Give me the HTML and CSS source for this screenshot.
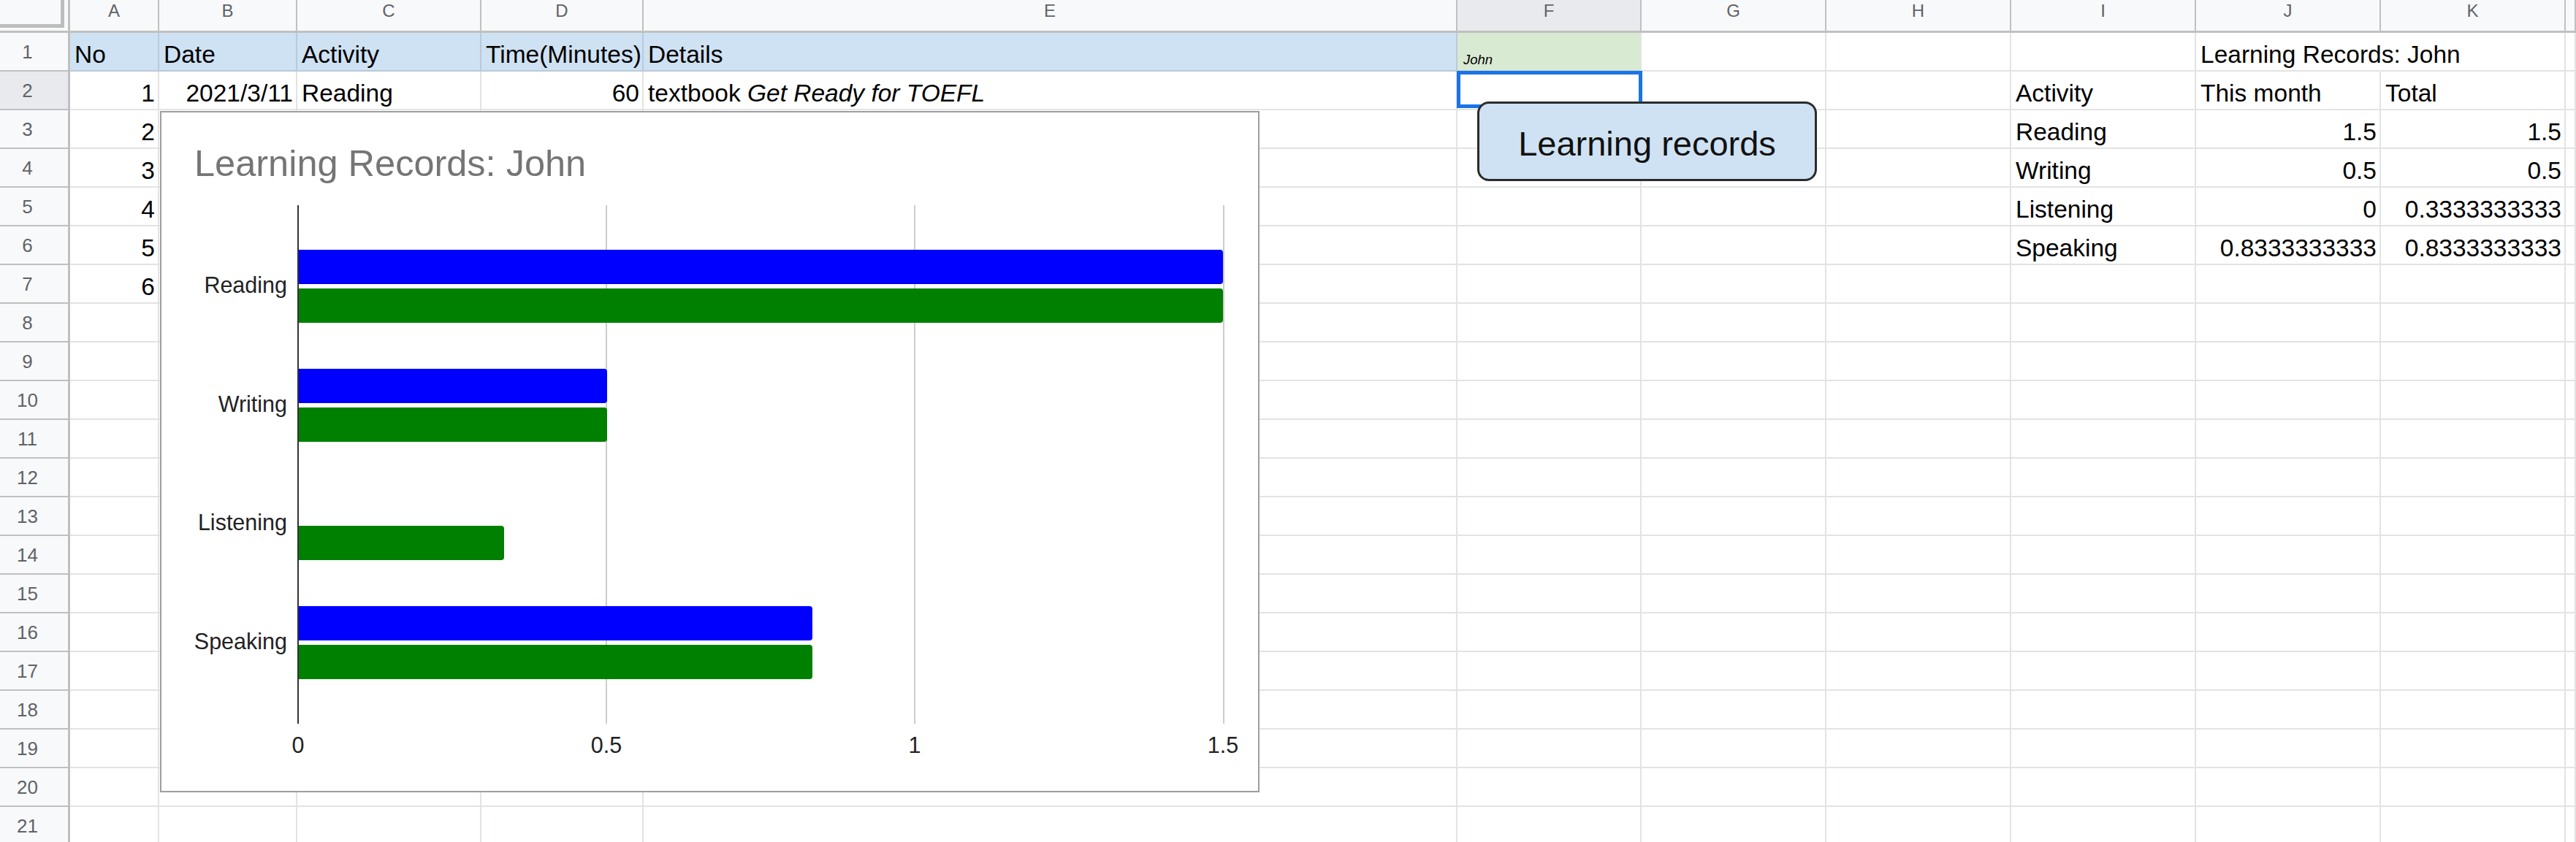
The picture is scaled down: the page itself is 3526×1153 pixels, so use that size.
FILE: index.html
```html
<!DOCTYPE html>
<html lang="en">
<head>
<meta charset="utf-8">
<title>Learning Records</title>
<link rel="stylesheet" href="styles.css">
</head>
<body>
<div class="sheet">
  <div class="grid-area">
    <!-- column headers -->
    <div class="corner"><div class="freeze"></div></div>
    <div class="h">A</div><div class="h">B</div><div class="h">C</div><div class="h">D</div><div class="h">E</div><div class="h sel">F</div><div class="h">G</div><div class="h">H</div><div class="h">I</div><div class="h">J</div><div class="h">K</div><div class="h"></div>
    <!-- row 1 -->
    <div class="r">1</div>
    <div class="c hd">No</div><div class="c hd">Date</div><div class="c hd">Activity</div><div class="c hd">Time(Minutes)</div><div class="c hd">Details</div><div class="c gr">John</div><div class="c"></div><div class="c"></div><div class="c"></div><div class="c ov">Learning Records: John</div><div class="c"></div><div class="c"></div>
    <!-- row 2 -->
    <div class="r sel">2</div>
    <div class="c num">1</div><div class="c num">2021/3/11</div><div class="c">Reading</div><div class="c num">60</div><div class="c">textbook&nbsp;<i>Get Ready for TOEFL</i></div><div class="c"></div><div class="c"></div><div class="c"></div><div class="c">Activity</div><div class="c">This month</div><div class="c">Total</div><div class="c"></div>
    <!-- row 3 -->
    <div class="r">3</div>
    <div class="c num">2</div><div class="c"></div><div class="c"></div><div class="c"></div><div class="c"></div><div class="c"></div><div class="c"></div><div class="c"></div><div class="c">Reading</div><div class="c num">1.5</div><div class="c num">1.5</div><div class="c"></div>
    <!-- row 4 -->
    <div class="r">4</div>
    <div class="c num">3</div><div class="c"></div><div class="c"></div><div class="c"></div><div class="c"></div><div class="c"></div><div class="c"></div><div class="c"></div><div class="c">Writing</div><div class="c num">0.5</div><div class="c num">0.5</div><div class="c"></div>
    <!-- row 5 -->
    <div class="r">5</div>
    <div class="c num">4</div><div class="c"></div><div class="c"></div><div class="c"></div><div class="c"></div><div class="c"></div><div class="c"></div><div class="c"></div><div class="c">Listening</div><div class="c num">0</div><div class="c num">0.3333333333</div><div class="c"></div>
    <!-- row 6 -->
    <div class="r">6</div>
    <div class="c num">5</div><div class="c"></div><div class="c"></div><div class="c"></div><div class="c"></div><div class="c"></div><div class="c"></div><div class="c"></div><div class="c">Speaking</div><div class="c num">0.8333333333</div><div class="c num">0.8333333333</div><div class="c"></div>
    <!-- row 7 -->
    <div class="r">7</div>
    <div class="c num">6</div><div class="c"></div><div class="c"></div><div class="c"></div><div class="c"></div><div class="c"></div><div class="c"></div><div class="c"></div><div class="c"></div><div class="c"></div><div class="c"></div><div class="c"></div>
    <!-- rows 8-21 -->
    <div class="r">8</div>
    <div class="c"></div><div class="c"></div><div class="c"></div><div class="c"></div><div class="c"></div><div class="c"></div><div class="c"></div><div class="c"></div><div class="c"></div><div class="c"></div><div class="c"></div><div class="c"></div>
    <div class="r">9</div>
    <div class="c"></div><div class="c"></div><div class="c"></div><div class="c"></div><div class="c"></div><div class="c"></div><div class="c"></div><div class="c"></div><div class="c"></div><div class="c"></div><div class="c"></div><div class="c"></div>
    <div class="r">10</div>
    <div class="c"></div><div class="c"></div><div class="c"></div><div class="c"></div><div class="c"></div><div class="c"></div><div class="c"></div><div class="c"></div><div class="c"></div><div class="c"></div><div class="c"></div><div class="c"></div>
    <div class="r">11</div>
    <div class="c"></div><div class="c"></div><div class="c"></div><div class="c"></div><div class="c"></div><div class="c"></div><div class="c"></div><div class="c"></div><div class="c"></div><div class="c"></div><div class="c"></div><div class="c"></div>
    <div class="r">12</div>
    <div class="c"></div><div class="c"></div><div class="c"></div><div class="c"></div><div class="c"></div><div class="c"></div><div class="c"></div><div class="c"></div><div class="c"></div><div class="c"></div><div class="c"></div><div class="c"></div>
    <div class="r">13</div>
    <div class="c"></div><div class="c"></div><div class="c"></div><div class="c"></div><div class="c"></div><div class="c"></div><div class="c"></div><div class="c"></div><div class="c"></div><div class="c"></div><div class="c"></div><div class="c"></div>
    <div class="r">14</div>
    <div class="c"></div><div class="c"></div><div class="c"></div><div class="c"></div><div class="c"></div><div class="c"></div><div class="c"></div><div class="c"></div><div class="c"></div><div class="c"></div><div class="c"></div><div class="c"></div>
    <div class="r">15</div>
    <div class="c"></div><div class="c"></div><div class="c"></div><div class="c"></div><div class="c"></div><div class="c"></div><div class="c"></div><div class="c"></div><div class="c"></div><div class="c"></div><div class="c"></div><div class="c"></div>
    <div class="r">16</div>
    <div class="c"></div><div class="c"></div><div class="c"></div><div class="c"></div><div class="c"></div><div class="c"></div><div class="c"></div><div class="c"></div><div class="c"></div><div class="c"></div><div class="c"></div><div class="c"></div>
    <div class="r">17</div>
    <div class="c"></div><div class="c"></div><div class="c"></div><div class="c"></div><div class="c"></div><div class="c"></div><div class="c"></div><div class="c"></div><div class="c"></div><div class="c"></div><div class="c"></div><div class="c"></div>
    <div class="r">18</div>
    <div class="c"></div><div class="c"></div><div class="c"></div><div class="c"></div><div class="c"></div><div class="c"></div><div class="c"></div><div class="c"></div><div class="c"></div><div class="c"></div><div class="c"></div><div class="c"></div>
    <div class="r">19</div>
    <div class="c"></div><div class="c"></div><div class="c"></div><div class="c"></div><div class="c"></div><div class="c"></div><div class="c"></div><div class="c"></div><div class="c"></div><div class="c"></div><div class="c"></div><div class="c"></div>
    <div class="r">20</div>
    <div class="c"></div><div class="c"></div><div class="c"></div><div class="c"></div><div class="c"></div><div class="c"></div><div class="c"></div><div class="c"></div><div class="c"></div><div class="c"></div><div class="c"></div><div class="c"></div>
    <div class="r">21</div>
    <div class="c"></div><div class="c"></div><div class="c"></div><div class="c"></div><div class="c"></div><div class="c"></div><div class="c"></div><div class="c"></div><div class="c"></div><div class="c"></div><div class="c"></div><div class="c"></div>
  </div>

  <!-- embedded chart (floats over the cells) -->
  <div class="chart">
    <div class="chart-title">Learning Records: John</div>
    <div class="chart-body">
      <div class="cats">
        <div class="cat">Reading</div>
        <div class="cat">Writing</div>
        <div class="cat">Listening</div>
        <div class="cat">Speaking</div>
      </div>
      <div class="plot">
        <div class="gline" style="left:420px"></div>
        <div class="gline" style="left:842px"></div>
        <div class="gline" style="left:1265px"></div>
        <div class="band">
          <div class="bar blue" style="width:1265px"></div>
          <div class="bar green" style="width:1265px"></div>
        </div>
        <div class="band">
          <div class="bar blue" style="width:422px"></div>
          <div class="bar green" style="width:422px"></div>
        </div>
        <div class="band">
          <div class="bar blue" style="width:0px"></div>
          <div class="bar green" style="width:281px"></div>
        </div>
        <div class="band">
          <div class="bar blue" style="width:703px"></div>
          <div class="bar green" style="width:703px"></div>
        </div>
        <div class="tick" style="left:-1px">0</div>
        <div class="tick" style="left:421px">0.5</div>
        <div class="tick" style="left:843px">1</div>
        <div class="tick" style="left:1265px">1.5</div>
      </div>
    </div>
  </div>

  <!-- active cell F2 -->
  <div class="selbox"></div>

  <!-- drawing button -->
  <div class="btn">Learning records</div>
</div>
</body>
</html>
```

FILE: styles.css
```css
html, body {
  margin: 0;
  padding: 0;
  background: #ffffff;
}

body {
  width: 3526px;
  height: 1153px;
  overflow: hidden;
  font-family: "Liberation Sans", Arial, sans-serif;
  color: #000;
}

.sheet {
  position: relative;
  width: 3526px;
  height: 1153px;
  overflow: hidden;
}

.grid-area {
  display: grid;
  grid-template-columns: 96px 122px 189px 252px 222px 1114px 252px 253px 253px 253px 253px 253px 14px;
  grid-template-rows: 45px repeat(21, 53px);
}

/* ---------- headers ---------- */
.corner {
  box-sizing: border-box;
  background: #f8f9fa;
  border-right: 3px solid #c0c0c0;
  border-bottom: 3px solid #c0c0c0;
}

.freeze {
  box-sizing: border-box;
  width: 88px;
  height: 38px;
  background: #f8f9fa;
  border-right: 5px solid #bdbdbd;
  border-bottom: 5px solid #bdbdbd;
}

.h {
  box-sizing: border-box;
  display: flex;
  justify-content: center;
  align-items: flex-start;
  padding-top: 3px;
  background: #f8f9fa;
  border-right: 2px solid #c0c0c0;
  border-bottom: 3px solid #c0c0c0;
  color: #5f6368;
  font-size: 24px;
  line-height: 24px;
}

.h.sel {
  background: #e8eaed;
}

.r {
  box-sizing: border-box;
  display: flex;
  align-items: center;
  justify-content: center;
  padding-right: 18px;
  background: #f8f9fa;
  border-right: 3px solid #c0c0c0;
  border-bottom: 2px solid #c0c0c0;
  color: #5f6368;
  font-size: 26px;
  line-height: 26px;
}

.r.sel {
  background: #e8eaed;
}

/* ---------- cells ---------- */
.c {
  box-sizing: border-box;
  display: flex;
  align-items: flex-end;
  padding: 0 4px 1px 6px;
  border-right: 2px solid #e2e3e3;
  border-bottom: 2px solid #e2e3e3;
  font-size: 33.5px;
  line-height: 40px;
  white-space: nowrap;
  min-width: 0;
}

.c.num {
  justify-content: flex-end;
}

.c.hd {
  background: #cfe2f3;
  border-right-color: #b9cad9;
  border-bottom-color: #b9cad9;
}

.c.gr {
  background: #d9ead3;
  border-bottom-color: #c8d5c3;
  padding: 0 4px 4px 8px;
  font-size: 18.5px;
  line-height: 20px;
  font-style: italic;
}

.c.ov {
  border-right-color: transparent;
  overflow: visible;
}

/* ---------- chart ---------- */
.chart {
  position: absolute;
  left: 219px;
  top: 152px;
  width: 1505px;
  height: 933px;
  box-sizing: border-box;
  border: 2px solid #9e9e9e;
  background: #ffffff;
  display: flex;
  flex-direction: column;
}

.chart-title {
  padding: 45px 0 0 45px;
  font-size: 50.5px;
  line-height: 50px;
  color: #757575;
}

.chart-body {
  display: flex;
  margin-top: 32px;
}

.cats {
  width: 186px;
  box-sizing: border-box;
  padding: 30px 14px 30px 0;
  display: flex;
  flex-direction: column;
}

.cat {
  height: 162.5px;
  box-sizing: border-box;
  padding-bottom: 4px;
  display: flex;
  align-items: center;
  justify-content: flex-end;
  font-size: 30.5px;
  line-height: 30px;
  color: #222;
}

.plot {
  position: relative;
  width: 1300px;
  height: 710px;
  box-sizing: border-box;
  border-left: 2px solid #333;
  padding: 30px 0;
  display: flex;
  flex-direction: column;
}

.gline {
  position: absolute;
  top: 0;
  bottom: 0;
  width: 2px;
  background: #cccccc;
}

.band {
  position: relative;
  z-index: 1;
  height: 162.5px;
  display: flex;
  flex-direction: column;
  justify-content: center;
  gap: 6px;
}

.bar {
  height: 47px;
  border-radius: 0 4px 4px 0;
}

.bar.blue {
  background: #0000ff;
}

.bar.green {
  background: #008000;
}

.tick {
  position: absolute;
  top: calc(100% + 13.5px);
  transform: translateX(-50%);
  font-size: 30.5px;
  line-height: 30px;
  color: #222;
  white-space: nowrap;
}

/* ---------- selection & button ---------- */
.selbox {
  position: absolute;
  left: 1994px;
  top: 97px;
  width: 254px;
  height: 51px;
  box-sizing: border-box;
  border: 5px solid #1a73e8;
}

.btn {
  position: absolute;
  left: 2022px;
  top: 139px;
  width: 465px;
  height: 109px;
  box-sizing: border-box;
  padding-top: 5px;
  border: 3px solid #2b2b2b;
  border-radius: 16px;
  background: #cfe2f3;
  display: flex;
  align-items: center;
  justify-content: center;
  font-size: 47px;
  color: #111;
}
```
